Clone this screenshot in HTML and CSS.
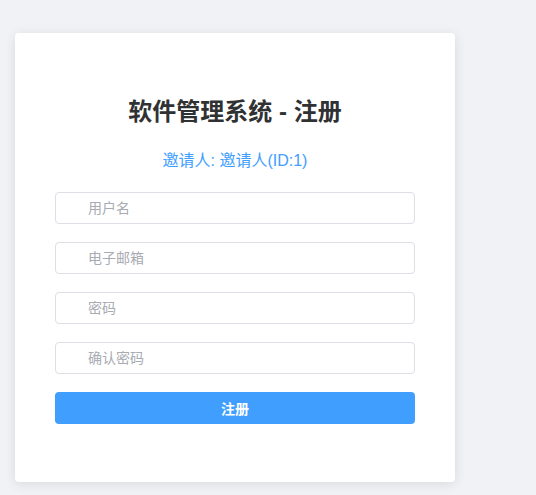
FILE: index.html
```html
<!DOCTYPE html>
<html lang="zh-CN">
<head>
    <meta charset="UTF-8">
    <meta name="viewport" content="width=device-width, initial-scale=1.0">
    <title>软件管理系统 - 注册</title>
    <link rel="stylesheet" href="styles.css">
</head>
<body>
    <div class="register-card">
        <h2 class="title">软件管理系统 - 注册</h2>
        <div class="inviter">邀请人: 邀请人(ID:1)</div>
        <form class="register-form">
            <div class="form-item">
                <input type="text" class="input" placeholder="用户名">
            </div>
            <div class="form-item">
                <input type="text" class="input" placeholder="电子邮箱">
            </div>
            <div class="form-item">
                <input type="password" class="input" placeholder="密码">
            </div>
            <div class="form-item">
                <input type="password" class="input" placeholder="确认密码">
            </div>
            <button type="submit" class="submit-btn">注册</button>
        </form>
    </div>
</body>
</html>
```

FILE: styles.css
```css
html, body {
    margin: 0;
    padding: 0;
}
body {
    font-family: "Liberation Sans", Arial, "Noto Sans CJK SC", sans-serif;
    background-color: #f0f2f5;
    min-height: 495px;
    padding-top: 33px;
    padding-left: 15px;
    box-sizing: border-box;
}
.register-card {
    width: 440px;
    box-sizing: border-box;
    padding: 40px 40px 58px;
    background-color: #fff;
    border-radius: 4px;
    box-shadow: 0 2px 12px rgba(0, 0, 0, 0.1);
}
.title {
    margin: 24px 0 22px;
    font-size: 24px;
    line-height: 30px;
    font-weight: bold;
    color: #303133;
    text-align: center;
}
.inviter {
    font-size: 16px;
    line-height: 24px;
    color: #409eff;
    text-align: center;
    margin-bottom: 19px;
}
.form-item {
    margin-bottom: 18px;
}
.input {
    display: block;
    width: 100%;
    height: 32px;
    box-sizing: border-box;
    padding: 0 11px 0 32px;
    border: 1px solid #dcdfe6;
    border-radius: 4px;
    font-family: inherit;
    font-size: 14px;
    color: #606266;
    outline: none;
}
.input::placeholder {
    color: #a8abb2;
}
.submit-btn {
    display: block;
    width: 100%;
    height: 32px;
    border: none;
    border-radius: 4px;
    background-color: #409eff;
    color: #fff;
    font-family: inherit;
    font-size: 14px;
    font-weight: bold;
    cursor: pointer;
}
```
